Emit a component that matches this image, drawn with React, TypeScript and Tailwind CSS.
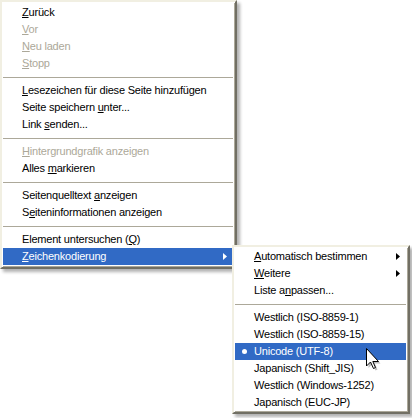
import React from "react";

type Item =
  | { sep: true }
  | {
      sep?: false;
      label: React.ReactNode;
      disabled?: boolean;
      active?: boolean;
      arrow?: boolean;
      bullet?: boolean;
    };

const u = (s: string) => <span className="underline underline-offset-[1px]">{s}</span>;

const mainItems: Item[] = [
  { label: <>{u("Z")}urück</> },
  { label: <>{u("V")}or</>, disabled: true },
  { label: <>{u("N")}eu laden</>, disabled: true },
  { label: <>{u("S")}topp</>, disabled: true },
  { sep: true },
  { label: <>{u("L")}esezeichen für diese Seite hinzufügen</> },
  { label: <>Seite speichern {u("u")}nter...</> },
  { label: <>Link {u("s")}enden...</> },
  { sep: true },
  { label: <>{u("H")}intergrundgrafik anzeigen</>, disabled: true },
  { label: <>Alles {u("m")}arkieren</> },
  { sep: true },
  { label: <>Seitenquelltext {u("a")}nzeigen</> },
  { label: <>S{u("e")}iteninformationen anzeigen</> },
  { sep: true },
  { label: <>Element untersuchen ({u("Q")})</> },
  { label: <>{u("Z")}eichenkodierung</>, active: true, arrow: true },
];

const subItems: Item[] = [
  { label: <>{u("A")}utomatisch bestimmen</>, arrow: true },
  { label: <>{u("W")}eitere</>, arrow: true },
  { label: <>Liste a{u("n")}passen...</> },
  { sep: true },
  { label: "Westlich (ISO-8859-1)" },
  { label: "Westlich (ISO-8859-15)" },
  { label: "Unicode (UTF-8)", active: true, bullet: true },
  { label: "Japanisch (Shift_JIS)" },
  { label: "Westlich (Windows-1252)" },
  { label: "Japanisch (EUC-JP)" },
];

function Arrow({ white }: { white?: boolean }) {
  return (
    <svg width="4" height="7" viewBox="0 0 4 7" className="ml-auto">
      <path d="M0 0 L4 3.5 L0 7 Z" fill={white ? "#ffffff" : "#000000"} />
    </svg>
  );
}

function MenuRows({ items }: { items: Item[] }) {
  return (
    <>
      {items.map((it, i) =>
        it.sep ? (
          <div key={i} className="h-[10px] flex items-center">
            <div className="h-px w-full bg-[#aca899]" />
          </div>
        ) : (
          <div
            key={i}
            className={`relative h-[17px] flex items-center pl-[19px] pr-[6px] whitespace-nowrap ${
              it.active ? "bg-[#316ac5] text-white" : it.disabled ? "text-[#aca899]" : "text-black"
            }`}
          >
            {it.bullet && (
              <span className="absolute left-[7px] top-[6px] w-[5px] h-[5px] rounded-full bg-white" />
            )}
            <span>{it.label}</span>
            {it.arrow && <Arrow white={it.active} />}
          </div>
        )
      )}
    </>
  );
}

const frame =
  "bg-white border-2 border-t-[#f1efe2] border-l-[#f1efe2] border-r-[#716f64] border-b-[#716f64] shadow-[inset_1px_1px_0_#ffffff,inset_-1px_-1px_0_#aca899,3px_3px_3px_rgba(0,0,0,0.3)]";

export default function App() {
  return (
    <div
      className="relative w-[412px] h-[418px] bg-white overflow-hidden text-[11px] leading-none tracking-[-0.2px]"
      style={{ fontFamily: "Tahoma, 'Liberation Sans', Arial, sans-serif" }}
    >
      <div className={`w-[237px] pt-[2px] pb-[2px] pl-px pr-[2px] ${frame}`}>
        <MenuRows items={mainItems} />
      </div>

      <div className={`absolute left-[232px] top-[245px] w-[178px] pt-px pb-px pl-px pr-[2px] ${frame}`}>
        <MenuRows items={subItems} />
      </div>

      <svg
        className="absolute left-[366px] top-[348px]"
        width="17"
        height="25"
        viewBox="0 0 17 25"
      >
        <path
          d="M2.5 2.5 V20 L6.5 16 L9.5 22.5 L11.5 21.5 L8.8 15.5 H14.5 Z"
          fill="rgba(0,0,0,0.25)"
        />
        <path
          d="M0.5 0.5 V18 L4.5 14 L7.5 20.5 L9.5 19.5 L6.8 13.5 H12.5 Z"
          fill="#ffffff"
          stroke="#000000"
          strokeWidth="1"
          strokeLinejoin="miter"
        />
      </svg>
    </div>
  );
}
